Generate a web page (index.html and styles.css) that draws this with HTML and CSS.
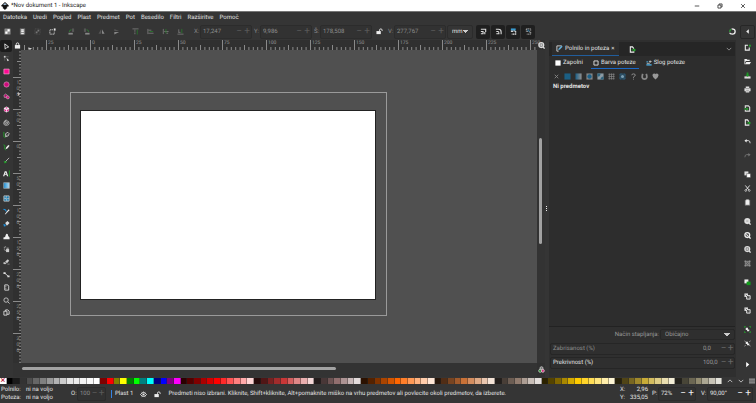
FILE: index.html
```html
<!DOCTYPE html>
<html lang="sl">
<head>
  <meta charset="UTF-8">
  <title>*Nov dokument 1 - Inkscape</title>
  <link rel="stylesheet" href="styles.css">
</head>
<body>
  <svg class="defs" aria-hidden="true">
    <symbol id="i-logo" viewBox="0 0 16 16"><path d="M8 0l7 6.500q1.500 2-1 2.500l-3 1 2 2-3 1.500L8 16l-2.500-2.500L3 12l1.500-2L2 9Q-.5 8 1 6.500z" fill="#111"/><path d="M8 2l3.500 3.500-2 .5L8 5 6.500 6.500l-2-1z" fill="#b8d4ee"/></symbol>
    <symbol id="i-min" viewBox="0 0 16 16"><path d="M2 8h12" stroke="#222" stroke-width="2"/></symbol>
    <symbol id="i-max" viewBox="0 0 16 16"><path d="M2.500 5.500h8v8h-8zM5.500 5V2.500h8v8H11" fill="none" stroke="#222" stroke-width="2"/></symbol>
    <symbol id="i-close" viewBox="0 0 16 16"><path d="M3 3l10 10M13 3L3 13" stroke="#222" stroke-width="2"/></symbol>

    <symbol id="i-all" viewBox="0 0 16 16"><rect x="1" y="1" width="14" height="14" rx="1" fill="#8a8a8a"/><path d="M8 3h5v5H8zM3 8h5v5H3z" fill="#fff"/></symbol>
    <symbol id="i-layers" viewBox="0 0 16 16"><path d="M2 1h12v14H2z" fill="#777"/><path d="M5 3h6v3H5zM5 7h6v2H5zM5 11h6v3H5z" fill="#eee"/></symbol>
    <symbol id="i-desel" viewBox="0 0 16 16"><path d="M2 2h12v12H2z" fill="none" stroke="#555" stroke-width="2" stroke-dasharray="2 2"/><path d="M8 4h4v4H8zM4 8h4v4H4z" fill="#777"/></symbol>
    <symbol id="i-touch" viewBox="0 0 16 16"><path d="M9 4H2v10h10V8" fill="none" stroke="#ccc" stroke-width="2" stroke-dasharray="3 1"/><path d="M11 1h4v5h-4z" fill="#eee"/></symbol>
    <symbol id="i-rotl" viewBox="0 0 16 16"><path d="M1 11h10v4H1z" fill="#888"/><path d="M9 1h5v8H9z" fill="#555"/><path d="M3 9Q3 4 8 4" fill="none" stroke="#2f7d33" stroke-width="2"/></symbol>
    <symbol id="i-rotr" viewBox="0 0 16 16"><path d="M5 11h10v4H5z" fill="#888"/><path d="M2 1h5v8H2z" fill="#555"/><path d="M13 9Q13 4 8 4" fill="none" stroke="#2f7d33" stroke-width="2"/></symbol>
    <symbol id="i-fliph" viewBox="0 0 16 16"><path d="M7 3v10H1z" fill="#555"/><path d="M9 3l6 10H9z" fill="#888"/></symbol>
    <symbol id="i-flipv" viewBox="0 0 16 16"><path d="M3 2l11 5H3z" fill="#555"/><path d="M3 9h11L3 15z" fill="#888"/></symbol>
    <symbol id="i-top" viewBox="0 0 16 16"><path d="M1 2h14M5 5h3M5 9h3M5 13h3" stroke="#777" stroke-width="2"/><path d="M12 15V4" stroke="#28752c" stroke-width="2"/></symbol>
    <symbol id="i-raise" viewBox="0 0 16 16"><path d="M2 2v12M3 5h7M3 12h12" stroke="#777" stroke-width="2"/><path d="M6 8h8" stroke="#28752c" stroke-width="2"/></symbol>
    <symbol id="i-lower" viewBox="0 0 16 16"><path d="M3 2v12M5 8h10M10 12h4" stroke="#777" stroke-width="2"/><path d="M9 2v10" stroke="#28752c" stroke-width="2"/></symbol>
    <symbol id="i-bottom" viewBox="0 0 16 16"><path d="M1 14h14M4 3v8M4 10h4" stroke="#777" stroke-width="2"/><path d="M11 2v10" stroke="#28752c" stroke-width="2"/></symbol>
    <symbol id="i-unlock" viewBox="0 0 16 16"><path d="M1 7h10v7H1z" fill="#eee"/><path d="M8 8V5q0-3 3-3t3 3v2" fill="none" stroke="#eee" stroke-width="2"/></symbol>
    <symbol id="i-lock" viewBox="0 0 16 16"><path d="M2 7h12v8H2z" fill="#eee"/><path d="M5 8V5q0-3 3-3t3 3v3" fill="none" stroke="#eee" stroke-width="2"/></symbol>
    <symbol id="i-s1" viewBox="0 0 16 16"><path d="M2 3h11v6M2 8h5v5H2M11 9v5" fill="none" stroke="#ddd" stroke-width="2.500"/></symbol>
    <symbol id="i-s2" viewBox="0 0 16 16"><path d="M2 3h6q6 0 6 6M3 8h4q2 0 2 5H3M14 9v5" fill="none" stroke="#ddd" stroke-width="2.500"/></symbol>
    <symbol id="i-s3" viewBox="0 0 16 16"><path d="M2 1h11v5H2z" fill="#3a9bd0"/><path d="M2 6h5v3H2z" fill="#ddd"/><path d="M8 7h5v7H4" fill="none" stroke="#ddd" stroke-width="2.500" stroke-dasharray="4 1"/></symbol>
    <symbol id="i-s4" viewBox="0 0 16 16"><path d="M3 2h10v4M3 2v6h4M9 9h4v5H4" fill="none" stroke="#bbb" stroke-width="2" stroke-dasharray="3 1"/><path d="M5 5h4v4" fill="none" stroke="#3b88b5" stroke-width="2"/></symbol>
    <symbol id="i-snap" viewBox="0 0 16 16"><path d="M6 2q8 0 8 6t-6 6-6-3" fill="none" stroke="#eee" stroke-width="3"/><path d="M5 3Q1 5 2 9" fill="none" stroke="#2e9a35" stroke-width="3"/></symbol>
    <symbol id="i-left" viewBox="0 0 16 16"><path d="M11 3v10L5 8z" fill="#eee"/></symbol>
    <symbol id="i-right" viewBox="0 0 16 16"><path d="M5 2v12l7-6z" fill="#fff"/></symbol>

    <symbol id="t-select" viewBox="0 0 16 16"><path d="M4 2l9 7-4 1-4 4z" fill="none" stroke="#eee" stroke-width="2"/></symbol>
    <symbol id="t-node" viewBox="0 0 16 16"><path d="M2 2h4v4H2z" fill="#ccc"/><path d="M6 4h7M4 6v7" stroke="#888"/><path d="M8 7l6 5-4 2z" fill="#ddd"/></symbol>
    <symbol id="t-rect" viewBox="0 0 16 16"><path d="M2 2.500h12v11H2z" fill="#ff0a93" stroke="#f6a9d2" stroke-width="1.500"/></symbol>
    <symbol id="t-circle" viewBox="0 0 16 16"><circle cx="8" cy="8" r="6" fill="#cf0c7c" stroke="#dd9cc0" stroke-width="1.500"/></symbol>
    <symbol id="t-shape" viewBox="0 0 16 16"><path d="M2 5l4-3 4 3-1 5H3z" fill="#b0146d" stroke="#ddd"/><circle cx="11" cy="10" r="3.500" fill="#d01b80" stroke="#ddd"/></symbol>
    <symbol id="t-box" viewBox="0 0 16 16"><path d="M8 1l6 3.500v7L8 15l-6-3.500v-7z" fill="#eee"/><path d="M5 4l3-1 3 1-3 2zM3 7l4 2v4l-4-2zM13 7L9 9v4l4-2z" fill="#e0208c"/></symbol>
    <symbol id="t-spiral" viewBox="0 0 16 16"><path d="M8 9q-2-2 1-2 3 1 1 4-3 2-6-1-1-5 4-6 6 0 6 6-1 4-4 4H4Q1 12 2 8q1-5 6-6" fill="none" stroke="#bbb" stroke-width="2"/></symbol>
    <symbol id="t-pen" viewBox="0 0 16 16"><path d="M2 2v11q0 2 4 1" fill="none" stroke="#21a529" stroke-width="2"/><path d="M6 6l5-3 3 3-2 5-6 2z" fill="none" stroke="#ccc" stroke-width="2"/><path d="M6 13l4-5" stroke="#ccc"/></symbol>
    <symbol id="t-pencil" viewBox="0 0 16 16"><path d="M1 2q5 0 3 5t3 7" fill="none" stroke="#21a529" stroke-width="2"/><path d="M6 12l1-4 5-6 3 2-5 6z" fill="#eee"/></symbol>
    <symbol id="t-brush" viewBox="0 0 16 16"><path d="M1 9q3 1 2 5 5 1 6-4z" fill="#21a529"/><path d="M6 10l8-8" stroke="#bbb" stroke-width="2"/></symbol>
    <symbol id="t-text" viewBox="0 0 16 16"><path d="M0 14L4 3h4l4 11H9l-1-3H4l-1 3zM5 9h2.500L6 5z" fill="#eee" fill-rule="evenodd"/><path d="M14.500 1v14" stroke="#21a529" stroke-width="2"/></symbol>
    <linearGradient id="blue"><stop offset="0" stop-color="#1689d0"/><stop offset="1" stop-color="#b6dff6"/></linearGradient>
    <symbol id="t-grad" viewBox="0 0 16 16"><path d="M1.500 1.500h13v13h-13z" fill="url(#blue)" stroke="#aaa" stroke-width="1.500"/></symbol>
    <symbol id="t-mesh" viewBox="0 0 16 16"><path d="M2 2h12v12H2z" fill="#1780b8" stroke="#bbb" stroke-width="2"/><path d="M2 7q5 3 12 1M8 2q-3 6 1 12" fill="none" stroke="#ccc" stroke-width="1.500"/></symbol>
    <symbol id="t-drop" viewBox="0 0 16 16"><path d="M1 3l4 1 3 4" fill="none" stroke="#1d90dd" stroke-width="2.500"/><path d="M4 14l6-8 3-3 2 2-3 3-6 6z" fill="#eee"/></symbol>
    <symbol id="t-bucket" viewBox="0 0 16 16"><path d="M5 7l5-5 5 5-6 6z" fill="#ddd"/><path d="M1 9l5 1v4l-4 1z" fill="#1d90dd"/></symbol>
    <symbol id="t-tweak" viewBox="0 0 16 16"><path d="M1 10q5 0 5-5 2-5 5-2 0 6 4 7v4H1z" fill="#eee"/></symbol>
    <symbol id="t-spray" viewBox="0 0 16 16"><path d="M7 7h7v7H7z" fill="#ccc"/><path d="M8 5h5M2 3h2M5 2h2M2 7h2M4 10h2" stroke="#ccc" stroke-width="2"/></symbol>
    <symbol id="t-eraser" viewBox="0 0 16 16"><path d="M5 8l6-5 3 3-5 6z" fill="#ccc"/><path d="M1 11l4-1 2 3H2zM10 14h5" fill="#ddd" stroke="#ddd"/></symbol>
    <symbol id="t-conn" viewBox="0 0 16 16"><path d="M1 3h5v4H1zM10 10h5v4h-5z" fill="#ddd"/><path d="M4 5l8 7" stroke="#ddd" stroke-width="2"/></symbol>
    <symbol id="t-measure" viewBox="0 0 16 16"><path d="M4 2h7l2 3v9H4z" fill="none" stroke="#ddd" stroke-width="2"/><path d="M5 6h3M5 10h3" stroke="#ddd"/></symbol>
    <symbol id="t-zoom" viewBox="0 0 16 16"><circle cx="7" cy="7" r="5" fill="none" stroke="#ccc" stroke-width="2"/><path d="M11 11l4 4" stroke="#ccc" stroke-width="2"/></symbol>
    <symbol id="t-pages" viewBox="0 0 16 16"><path d="M2 5h7v9H2zM6 5V2h5l3 3v7H9" fill="none" stroke="#ddd" stroke-width="2"/></symbol>

    <symbol id="c-new" viewBox="0 0 16 16"><path d="M9 3H3v11h9V8" fill="none" stroke="#eee" stroke-width="2.500"/><path d="M11 4h5M13.500 1v6" stroke="#23b02c" stroke-width="2"/></symbol>
    <symbol id="c-open" viewBox="0 0 16 16"><path d="M1 2h5l2 2h5v3H4l-2 5 1 1 2-4h11l-3 5H1z" fill="#eee"/></symbol>
    <symbol id="c-save" viewBox="0 0 16 16"><path d="M1 10h14v5H1z" fill="#ddd"/><path d="M6 1h4v5h3l-5 5-5-5h3z" fill="#1d9a26"/></symbol>
    <symbol id="c-print" viewBox="0 0 16 16"><path d="M4 1h8v4h3v7h-3v3H4v-3H1V5h3z" fill="#ddd"/><path d="M4 6h8M5 11h6" stroke="#444"/></symbol>
    <symbol id="c-import" viewBox="0 0 16 16"><path d="M3 7V2h7l3 3v9H3v-3" fill="none" stroke="#ddd" stroke-width="2.500"/><path d="M0 9h7" stroke="#23b02c" stroke-width="2"/><path d="M6 5l4 4-4 4z" fill="#23b02c"/></symbol>
    <symbol id="c-export" viewBox="0 0 16 16"><path d="M11 6L8 2H3v12h8v-2" fill="none" stroke="#eee" stroke-width="2.500"/><path d="M6 9h6" stroke="#23b02c" stroke-width="2"/><path d="M11 5l5 4-5 4z" fill="#23b02c"/></symbol>
    <symbol id="c-undo" viewBox="0 0 16 16"><path d="M4 6h6q4 0 4 6" fill="none" stroke="#eee" stroke-width="2"/><path d="M6 2v8L1 6z" fill="#eee"/></symbol>
    <symbol id="c-redo" viewBox="0 0 16 16"><path d="M12 6H6q-4 0-4 6" fill="none" stroke="#777" stroke-width="2"/><path d="M10 2v8l5-4z" fill="#777"/></symbol>
    <symbol id="c-copy" viewBox="0 0 16 16"><path d="M1 1h9v9H1z" fill="#ddd"/><path d="M6 6h9v9H6z" fill="#fff" stroke="#333"/></symbol>
    <symbol id="c-cut" viewBox="0 0 16 16"><path d="M3 1l8 10M13 1L5 11" stroke="#eee" stroke-width="2"/><circle cx="4" cy="12.500" r="2" fill="none" stroke="#eee" stroke-width="1.500"/><circle cx="12" cy="12.500" r="2" fill="none" stroke="#eee" stroke-width="1.500"/></symbol>
    <symbol id="c-paste" viewBox="0 0 16 16"><path d="M2 2h12v13H2z" fill="#888"/><path d="M5 1h6v3h1v9H4V4h1z" fill="#eee"/></symbol>
    <symbol id="c-zoom1" viewBox="0 0 16 16"><circle cx="7.500" cy="7" r="7" fill="#ddd"/><path d="M5 5h5v4H5z" fill="#bbb"/><path d="M11 11l4 4" stroke="#ddd" stroke-width="3"/></symbol>
    <symbol id="c-zoom2" viewBox="0 0 16 16"><circle cx="7.500" cy="7" r="5.500" fill="#444" stroke="#eee" stroke-width="3"/><path d="M3 3l5 3 3 4-4-1z" fill="#eee"/><path d="M11 11l4 4" stroke="#eee" stroke-width="3"/></symbol>
    <symbol id="c-zoom3" viewBox="0 0 16 16"><circle cx="7.500" cy="7" r="7" fill="#ddd"/><path d="M5 4h5v6H5z" fill="none" stroke="#666" stroke-width="1.500"/><path d="M11 11l4 4" stroke="#ddd" stroke-width="3"/></symbol>
    <symbol id="c-center" viewBox="0 0 16 16"><path d="M1 3h14M1 13h14M3 1v14M13 1v14" stroke="#999" stroke-width="2"/><path d="M6 6h4v4H6z" fill="none" stroke="#bbb" stroke-width="1.500"/></symbol>
    <symbol id="c-dup" viewBox="0 0 16 16"><path d="M1 1h9v9H1z" fill="#eee"/><path d="M6 6h9v8H6z" fill="#119c1b"/></symbol>
    <symbol id="c-clone" viewBox="0 0 16 16"><path d="M1 1h8v8H1z" fill="#ddd"/><path d="M6 6h8v8H6z" fill="#555" stroke="#eee" stroke-width="2"/><path d="M4 4l6 6" stroke="#333" stroke-width="1.500"/></symbol>
    <symbol id="c-group" viewBox="0 0 16 16"><path d="M1 4V1h3M12 1h3v3M15 12v3h-3M4 15H1v-3" fill="none" stroke="#23a02c" stroke-width="2"/><path d="M4 4h5v4h3v4H7V9H4z" fill="#eee"/></symbol>
    <symbol id="c-ungroup" viewBox="0 0 16 16"><path d="M1 2l3 2M15 2l-3 2M15 14l-3-2M1 14l3-2" stroke="#aaa" stroke-width="2"/><path d="M4 4h5v4h3v4H7V9H4z" fill="#eee"/></symbol>

    <symbol id="d-fill" viewBox="0 0 16 16"><path d="M2 14V2h11" fill="none" stroke="#ddd" stroke-width="2"/><path d="M5 12l1-4 7-7 2 3-6 6z" fill="#62add8"/><path d="M2 14h4" stroke="#ddd" stroke-width="2"/></symbol>
    <symbol id="d-style" viewBox="0 0 16 16"><path d="M1 13h14" stroke="#48a1d1" stroke-width="4"/><path d="M1 5h5" stroke="#48a1d1" stroke-width="3"/><path d="M2 9h8M11 1v7M15 4H8" stroke="#ccc" stroke-width="2"/></symbol>
    <symbol id="d-square" viewBox="0 0 16 16"><path d="M1 1h14v14H1z" fill="#fff"/></symbol>
    <symbol id="d-stroke" viewBox="0 0 16 16"><path d="M2.500 2.500h11v11h-11z" fill="none" stroke="#ddd" stroke-width="2.500"/></symbol>
    <symbol id="p-none" viewBox="0 0 16 16"><path d="M4 4l8 8M12 4l-8 8" stroke="#888" stroke-width="2"/></symbol>
    <symbol id="p-flat" viewBox="0 0 16 16"><path d="M1 1h14v14H1z" fill="#1b5f84"/></symbol>
    <linearGradient id="fade"><stop offset="0" stop-color="#1b6088"/><stop offset="1" stop-color="#919191"/></linearGradient>
    <symbol id="p-lin" viewBox="0 0 16 16"><path d="M1 1h14v14H1z" fill="url(#fade)"/></symbol>
    <symbol id="p-rad" viewBox="0 0 16 16"><path d="M1 1h14v14H1z" fill="#888"/><circle cx="8" cy="8" r="5" fill="#1b6088"/></symbol>
    <symbol id="p-mesh" viewBox="0 0 16 16"><path d="M1 1h14v14H1z" fill="#8c9ba4"/><path d="M1 8Q8 9 8 1H1zM8 15q0-6 7-7v7z" fill="#31657f"/></symbol>
    <symbol id="p-patt" viewBox="0 0 16 16"><path d="M3 1v14M8 1v14M13 1v14M1 3h14M1 8h14M1 13h14" stroke="#8b8b8b" stroke-width="1.500"/></symbol>
    <symbol id="p-swatch" viewBox="0 0 16 16"><path d="M2 2h12v12H2z" fill="#2d4758" stroke="#2a668a" stroke-width="2" stroke-dasharray="2 1"/><circle cx="8" cy="8" r="3.500" fill="#7b9fb3"/></symbol>
    <symbol id="p-unset" viewBox="0 0 16 16"><path d="M4 5q0-3 4-3t4 3q0 2-4 4v2M8 13v2" fill="none" stroke="#999" stroke-width="2"/></symbol>
    <symbol id="p-horse" viewBox="0 0 16 16"><path d="M4 2Q0 14 8 14T12 2" fill="none" stroke="#888" stroke-width="4"/></symbol>
    <symbol id="p-heart" viewBox="0 0 16 16"><path d="M8 15Q1 9 1 5t4-4q3 0 3 2 0-2 3-2 4 0 4 4t-7 10z" fill="#999"/></symbol>
    <symbol id="i-down" viewBox="0 0 16 16"><path d="M2 5l6 6 6-6" fill="none" stroke="currentColor" stroke-width="2"/></symbol>
    <symbol id="i-up" viewBox="0 0 16 16"><path d="M2 11l6-6 6 6" fill="none" stroke="currentColor" stroke-width="2"/></symbol>
    <symbol id="i-menu" viewBox="0 0 16 16"><path d="M0 3h16M0 8h16M0 13h16" stroke="#ddd" stroke-width="2"/></symbol>
    <symbol id="i-eye" viewBox="0 0 16 16"><path d="M1 8q7-9 14 0-7 9-14 0z" fill="#333" stroke="#eee" stroke-width="2"/><circle cx="8" cy="8" r="2.500" fill="#eee"/><path d="M4 2l1 2M12 2l-1 2M8 1v2M4 14l1-2M12 14l-1-2" stroke="#eee" stroke-width="1.500"/></symbol>
    <symbol id="i-cms" viewBox="0 0 16 16"><circle cx="8" cy="5" r="3.500" fill="#777" stroke="#ddd" stroke-width="1.500"/><circle cx="5" cy="11" r="3.500" fill="#288d2f" stroke="#ddd" stroke-width="1.500"/><circle cx="11" cy="11" r="3.500" fill="#d1307c" stroke="#ddd" stroke-width="1.500"/></symbol>
  </svg>

  <header class="titlebar">
    <svg class="icon logo"><use href="#i-logo"/></svg>
    <span class="title">*Nov dokument 1 - Inkscape</span>
    <button class="win" aria-label="Pomanjšaj"><svg class="icon small"><use href="#i-min"/></svg></button>
    <button class="win" aria-label="Obnovi"><svg class="icon small"><use href="#i-max"/></svg></button>
    <button class="win" aria-label="Zapri"><svg class="icon small"><use href="#i-close"/></svg></button>
  </header>

  <nav class="menubar">
    <button>Datoteka</button><button>Uredi</button><button>Pogled</button><button>Plast</button><button>Predmet</button><button>Pot</button><button>Besedilo</button><button>Filtri</button><button>Razširitve</button><button>Pomoč</button>
  </nav>

  <div class="toolbar">
    <div class="group" data-icons="i-all i-layers i-desel i-touch"></div>
    <div class="group" data-icons="i-rotl i-rotr i-fliph i-flipv"></div>
    <div class="group" data-icons="i-top i-raise i-lower i-bottom"></div>
    <label for="posX">X:</label>
    <div class="spin dim"><input id="posX" value="17,247"><button>−</button><button>+</button></div>
    <label for="posY">Y:</label>
    <div class="spin dim"><input id="posY" value="9,986"><button>−</button><button>+</button></div>
    <label for="sizeW">Š:</label>
    <div class="spin dim"><input id="sizeW" value="178,508"><button>−</button><button>+</button></div>
    <button class="lock" aria-label="Zakleni razmerje"><svg class="icon"><use href="#i-unlock"/></svg></button>
    <label for="sizeH">V:</label>
    <div class="spin dim"><input id="sizeH" value="277,767"><button>−</button><button>+</button></div>
    <select class="unit" aria-label="Enota"><option>mm</option></select>
    <div class="group pressed" data-icons="i-s1 i-s2 i-s3 i-s4"></div>
    <div class="group snap" data-icons="i-snap i-left"></div>
  </div>

  <main class="main">
    <nav class="toolbox" data-icons="t-select t-node t-rect t-circle t-shape t-box t-spiral t-pen t-pencil t-brush t-text t-grad t-mesh t-drop t-bucket t-tweak t-spray t-eraser t-conn t-measure t-zoom t-pages"></nav>

    <section class="canvas">
      <button class="corner" aria-label="Zakleni vodila"><svg class="icon"><use href="#i-lock"/></svg></button>
      <div class="ruler-top">
        <svg class="ticks">
          <pattern id="ticksX" x="25" width="44" height="10" patternUnits="userSpaceOnUse">
            <path d="M.5 0v10M22.500 5v5M4.900 7v3M9.300 7v3M13.700 7v3M18.100 7v3M26.900 7v3M31.300 7v3M35.700 7v3M40.100 7v3" stroke="#8a8a8a"/>
          </pattern>
          <rect width="100%" height="10" fill="url(#ticksX)"/>
          <path d="M7 8h4l-2 2z" fill="#ccc"/>
        </svg>
        <div class="labels"><span>25</span><span>0</span><span>25</span><span>50</span><span>75</span><span>100</span><span>125</span><span>150</span><span>175</span><span>200</span><span>225</span><span>250</span></div>
      </div>
      <button class="corner" aria-label="Povečava"><svg class="icon"><use href="#c-zoom3"/></svg></button>
      <div class="ruler-left">
        <svg class="ticks">
          <pattern id="ticksY" y="27" width="8" height="32" patternUnits="userSpaceOnUse">
            <path d="M0 .5h8M4 16.500h4M6 3.700h2M6 6.900h2M6 10.100h2M6 13.300h2M6 19.700h2M6 22.900h2M6 26.100h2M6 29.300h2" stroke="#8a8a8a"/>
          </pattern>
          <rect width="8" height="100%" fill="url(#ticksY)"/>
          <path d="M5 42v4l2-2z" fill="#ccc"/>
        </svg>
        <div class="labels"><span>100</span><span>50</span><span>0</span><span>50</span><span>100</span><span>150</span><span>200</span><span>250</span><span>300</span></div>
      </div>
      <div class="viewport"><div class="frame"><div class="page"></div></div></div>
      <div class="scroll-y"><i></i></div>
      <div class="scroll-x"><i></i></div>
      <button class="corner cms" aria-label="Upravljanje barv"><svg class="icon"><use href="#i-cms"/></svg></button>
    </section>

    <div class="splitter"></div>

    <aside class="dock">
      <div class="panel">
        <div class="tabs">
          <button class="tab active"><svg class="icon"><use href="#d-fill"/></svg>Polnilo in poteza <span>×</span></button>
          <button class="tab export" aria-label="Izvozi"><svg class="icon"><use href="#c-export"/></svg></button>
          <button class="more" aria-label="Več"><svg class="icon small"><use href="#i-down"/></svg></button>
        </div>
        <div class="subtabs">
          <button><svg class="icon small"><use href="#d-square"/></svg>Zapolni</button>
          <button class="active"><svg class="icon small"><use href="#d-stroke"/></svg>Barva poteze</button>
          <button><svg class="icon small"><use href="#d-style"/></svg>Slog poteze</button>
        </div>
        <div class="paints" data-icons="p-none p-flat p-lin p-rad p-mesh p-patt p-swatch p-unset p-horse p-heart"></div>
        <p class="empty">Ni predmetov</p>
      </div>
      <div class="blend">
        <label for="blend">Način stapljanja:</label>
        <select id="blend"><option>Običajno</option></select>
      </div>
      <div class="slider dim"><label for="blur">Zabrisanost (%)</label><input id="blur" value="0,0"><button>−</button><button>+</button></div>
      <div class="slider"><label for="opac">Prekrivnost (%)</label><input id="opac" value="100,0"><button>−</button><button>+</button></div>
    </aside>

    <nav class="commands">
      <div data-icons="c-new c-open c-save c-print"></div>
      <div data-icons="c-import c-export"></div>
      <div data-icons="c-undo c-redo"></div>
      <div data-icons="c-copy c-cut c-paste"></div>
      <div data-icons="c-zoom1 c-zoom2 c-zoom3 c-center"></div>
      <div data-icons="c-dup c-clone c-clone"></div>
      <div data-icons="c-group c-ungroup"></div>
      <div class="last" data-icons="i-right"></div>
    </nav>
  </main>

  <div class="palette">
    <div class="swatches" id="swatches"></div>
    <button aria-label="Gor"><svg class="icon small"><use href="#i-up"/></svg></button>
    <button aria-label="Dol"><svg class="icon small"><use href="#i-down"/></svg></button>
    <button aria-label="Meni"><svg class="icon small"><use href="#i-menu"/></svg></button>
  </div>

  <footer class="status">
    <div class="style"><span>Polnilo:</span><span>ni na voljo</span><span>Poteza:</span><span>ni na voljo</span></div>
    <label for="op">O:</label>
    <div class="spin dim op"><input id="op" value="100"><button>−</button><button>+</button></div>
    <button class="layer">Plast 1</button>
    <button aria-label="Vidnost"><svg class="icon"><use href="#i-eye"/></svg></button>
    <button aria-label="Zaklep"><svg class="icon"><use href="#i-unlock"/></svg></button>
    <p class="message">Predmeti niso izbrani. Kliknite, Shift+kliknite, Alt+pomaknite miško na vrhu predmetov ali povlecite okoli predmetov, da izberete.</p>
    <div class="coords"><span>X:</span><span>2,96</span><span>Y:</span><span>335,05</span></div>
    <label for="zoom">P:</label>
    <div class="spin view"><input id="zoom" value="72%"><button>−</button><button>+</button></div>
    <label for="rot">V:</label>
    <div class="spin view rot"><input id="rot" value="90,00°"><button>−</button><button>+</button></div>
  </footer>

  <script src="script.js"></script>
</body>
</html>
```
FILE: styles.css
```css
* {
  box-sizing: border-box;
}
body {
  margin: 0;
  height: 100vh;
  display: flex;
  flex-direction: column;
  overflow: hidden;
  background: #353535;
  color: #e2e2e2;
  font: 6px/8px Roboto, "Open Sans", sans-serif;
  text-rendering: geometricPrecision;
}
button, input, select {
  margin: 0;
  padding: 0;
  border: 0;
  background: none;
  color: inherit;
  font: inherit;
  text-rendering: inherit;
}
button {
  display: flex;
  align-items: center;
  justify-content: center;
}
p {
  margin: 0;
}
.defs {
  position: absolute;
  width: 0;
  height: 0;
}
.icon {
  display: block;
  flex: none;
  width: 7px;
  height: 7px;
}
.icon.small {
  width: 6px;
  height: 6px;
}
.icon.logo {
  width: 8px;
  height: 8px;
}

/* window title and menus */
.titlebar {
  display: flex;
  align-items: center;
  height: 12px;
  padding: 0 2px 0 1px;
  background: #fff;
  border-bottom: 1px solid #777;
  color: #222;
}
.title {
  flex: 1;
  padding-left: 2px;
}
.win {
  width: 23px;
  height: 11px;
}
.menubar {
  display: flex;
  gap: 6px;
  height: 11px;
  padding-left: 3px;
}

/* tool controls */
.toolbar {
  display: flex;
  align-items: center;
  height: 17px;
}
.group {
  display: flex;
  margin-right: 4px;
}
.group button {
  width: 15px;
  height: 14px;
}
.toolbar label {
  width: 8px;
  padding-left: 2px;
  color: #8a8a8a;
}
.spin {
  display: flex;
  width: 52px;
  height: 14px;
  border: 1px solid #2c2c2c;
  border-radius: 2px;
  background: #323232;
}
.spin input {
  flex: 1;
  min-width: 0;
  padding-left: 2px;
}
.spin button, .slider button {
  width: 8px;
  font-size: 10px;
}
.dim {
  color: #8d8d8d;
}
.dim button {
  color: #595959;
}
.lock {
  width: 14px;
}
.unit {
  width: 26px;
  height: 14px;
  margin: 0 3px 0 1px;
  border: 1px solid #2c2c2c;
  border-radius: 2px;
}
.pressed button {
  width: 14px;
  margin-right: 1px;
  border-radius: 2px;
  background: #1f1f1f;
}
.snap {
  margin: 0 1px 0 auto;
}
.snap button + button {
  border: 1px solid #272727;
  border-radius: 2px;
}

/* work area */
.main {
  flex: 1;
  min-height: 0;
  display: flex;
}
.toolbox {
  display: flex;
  flex-direction: column;
  justify-content: space-between;
  width: 13px;
  padding-bottom: 58px;
}
.toolbox button {
  width: 12px;
  height: 12px;
}
.toolbox button:first-child {
  border-radius: 2px;
  background: #1c1c1c;
}
.canvas {
  flex: 1;
  display: grid;
  grid-template-columns: 8px minmax(0, 1fr) 8px;
  grid-template-rows: 10px minmax(0, 1fr) 14px;
  min-width: 0;
  background: #303030;
}
.ruler-top, .ruler-left {
  display: grid;
  grid-template-columns: minmax(0, 1fr);
  grid-template-rows: minmax(0, 1fr);
  color: #999;
}
.ruler-top > *, .ruler-left > * {
  grid-area: 1 / 1;
}
.ticks {
  width: 100%;
  height: 100%;
}
.labels {
  display: flex;
  font-size: 5px;
  line-height: 6px;
}
.labels span {
  flex: none;
}
.ruler-top .labels {
  padding-left: 27px;
}
.ruler-top span {
  width: 44px;
}
.ruler-left .labels {
  flex-direction: column;
  padding-top: 30px;
}
.ruler-left span {
  height: 32px;
  writing-mode: vertical-rl;
  text-orientation: upright;
}
.viewport {
  overflow: hidden;
  background: #505050;
}
.frame {
  width: 317px;
  height: 224px;
  margin: 42px 0 0 49px;
  padding: 17px 10px 15px 9px;
  border: 1px solid #9a9a9a;
}
.page {
  height: 100%;
  border: 1px solid #222;
  background: #fff;
}
.scroll-y, .scroll-x {
  background: #333;
}
.scroll-y {
  padding: 88px 3px 0 2px;
}
.scroll-y i {
  display: block;
  height: 106px;
  border-radius: 2px;
  background: #a2a2a2;
}
.scroll-x {
  grid-column: 1 / 3;
  padding: 4px 0 0 9px;
}
.scroll-x i {
  display: block;
  width: 61%;
  height: 3px;
  border-radius: 2px;
  background: #a2a2a2;
}
.cms {
  align-items: flex-end;
  height: 10px;
}
.splitter {
  display: flex;
  align-items: center;
  width: 4px;
}
.splitter::before {
  content: "";
  width: 1px;
  height: 5px;
  margin-left: 1px;
  background: repeating-linear-gradient(#eee 0 1px, transparent 1px 2px);
}

/* docked dialogs */
.dock {
  display: flex;
  flex-direction: column;
  width: 187px;
  padding: 2px 1px 7px 0;
  background: #2f2f2f;
}
.panel {
  flex: 1;
  border-bottom: 1px solid #222;
  background: #2d2d2d;
}
.tabs {
  display: flex;
  height: 14px;
  padding-left: 3px;
  background: #262626;
}
.tab {
  gap: 2px;
  padding: 0 5px 0 4px;
}
.tab.active {
  border-bottom: 1px solid #215d9c;
  background: #2d2d2d;
}
.tab.export {
  padding: 0 10px;
}
.more {
  width: 12px;
  margin-left: auto;
  color: #aaa;
}
.subtabs {
  display: flex;
  gap: 5px;
  height: 12px;
  margin-top: 1px;
  padding-left: 4px;
}
.subtabs button {
  gap: 2px;
  padding: 0 3px 0 2px;
  border-bottom: 1px solid transparent;
}
.subtabs .active {
  border-bottom-color: #1b68c7;
}
.paints {
  display: flex;
  height: 14px;
  padding-left: 2px;
}
.paints button {
  width: 11px;
}
.empty {
  padding-left: 4px;
  font-weight: bold;
}
.blend {
  display: flex;
  align-items: center;
  justify-content: flex-end;
  gap: 1px;
  height: 15px;
  color: #999;
}
.blend select {
  width: 75px;
  height: 11px;
  border: 1px solid #272727;
  border-radius: 2px;
}
.slider {
  display: flex;
  align-items: center;
  height: 12px;
  margin: 1px 0 1px 1px;
  border: 1px solid #262626;
  border-radius: 2px;
}
.slider label {
  flex: 1;
  padding-left: 2px;
}
.slider input {
  width: 17px;
  color: #999;
}
.slider button {
  width: 7px;
  color: #666;
}
.commands {
  width: 20px;
  padding-left: 2px;
}
.commands div {
  margin-bottom: 5px;
}
.commands button {
  width: 18px;
  height: 14px;
}
.commands .last {
  margin-top: 7px;
}

/* palette */
.palette {
  display: flex;
  align-items: center;
  gap: 5px;
  height: 8px;
  padding-right: 1px;
}
.swatches {
  flex: 1;
  display: flex;
  height: 6px;
}
.swatches button {
  flex: 1;
  border-right: 1px solid rgba(40, 40, 40, 0.4);
}
.swatches .none {
  background: #fff;
  color: #b00020;
  font-size: 9px;
}

/* status bar */
.status {
  display: flex;
  align-items: center;
  height: 18px;
}
.style, .coords {
  display: grid;
  grid-template-columns: 25px 1fr;
}
.style {
  width: 71px;
  padding-left: 1px;
}
.coords {
  grid-template-columns: 7px 21px;
  margin-right: 4px;
}
.coords span:nth-child(even) {
  text-align: right;
}
.status .op {
  width: 29px;
  margin: 0 5px 0 0;
}
.status .op button {
  width: 7px;
}
.status label {
  width: 6px;
}
.layer {
  margin-right: 7px;
  padding-left: 3px;
  border-left: 1px solid #3584e4;
}
.status .icon {
  margin-right: 7px;
}
.message {
  flex: 1;
  min-width: 0;
  white-space: nowrap;
}
.view {
  width: 38px;
  margin-right: 5px;
}
.view.rot {
  width: 46px;
  margin-right: 3px;
}
.view button {
  color: #eee;
}

/* drop-down arrows */
select {
  appearance: none;
  padding-left: 4px;
  background: conic-gradient(from -45deg at 50% 100%, #ccc 90deg, transparent 0) no-repeat right 4px center / 6px 3px;
}
```
FILE: script.js
```javascript
const colors = `000000 1a1a1a 333333 4d4d4d 666666 808080 999999 b3b3b3 cccccc e6e6e6 ececec f2f2f2 f9f9f9 ffffff
800000 ff0000 808000 ffff00 008000 00ff00 008080 00ffff 000080 0000ff 800080 ff00ff
2b0000 550000 800000 aa0000 d40000 ff0000 ff2a2a ff5555 ff8080 ffaaaa ffd5d5
280b0b 501616 782121 a02c2c c83737 d35f5f de8787 e9afaf f4d7d7
241c1c 483737 6c5353 916f6f ac9393 c8b7b7 e3dbdb
2b1100 552200 803300 aa4400 d45500 ff6600 ff7f2a ff9955 ffb380 ffccaa ffe6d5
28170b 502d16 784421 a05a2c c87137 d38d5f deaa87 e9c6af f4e3d7
241f1c 483e37 6c5d53 917c6f ac9d93 c8beb7 e3dedb
2b2200 554400 806600 aa8800 d4aa00 ffcc00 ffd42a ffdd55 ffe680 ffeeaa fff6d5
28220b 504416 786721 a0892c c8ab37 d3bc5f decd87 e9ddaf f4eed7
24221c 484537 6c6753 918a6f aca793 c8c4b7 e3e2db`.split(/\s+/);

// icon button rows
document.querySelectorAll("[data-icons]").forEach(row => {
  row.innerHTML = row.dataset.icons.split(" ")
    .map(id => `<button aria-label="${id}"><svg class="icon"><use href="#${id}"/></svg></button>`)
    .join("");
});

document.getElementById("swatches").innerHTML =
  `<button class="none">×</button>` +
  colors.map(c => `<button style="background:#${c}" aria-label="#${c}"></button>`).join("");
```
